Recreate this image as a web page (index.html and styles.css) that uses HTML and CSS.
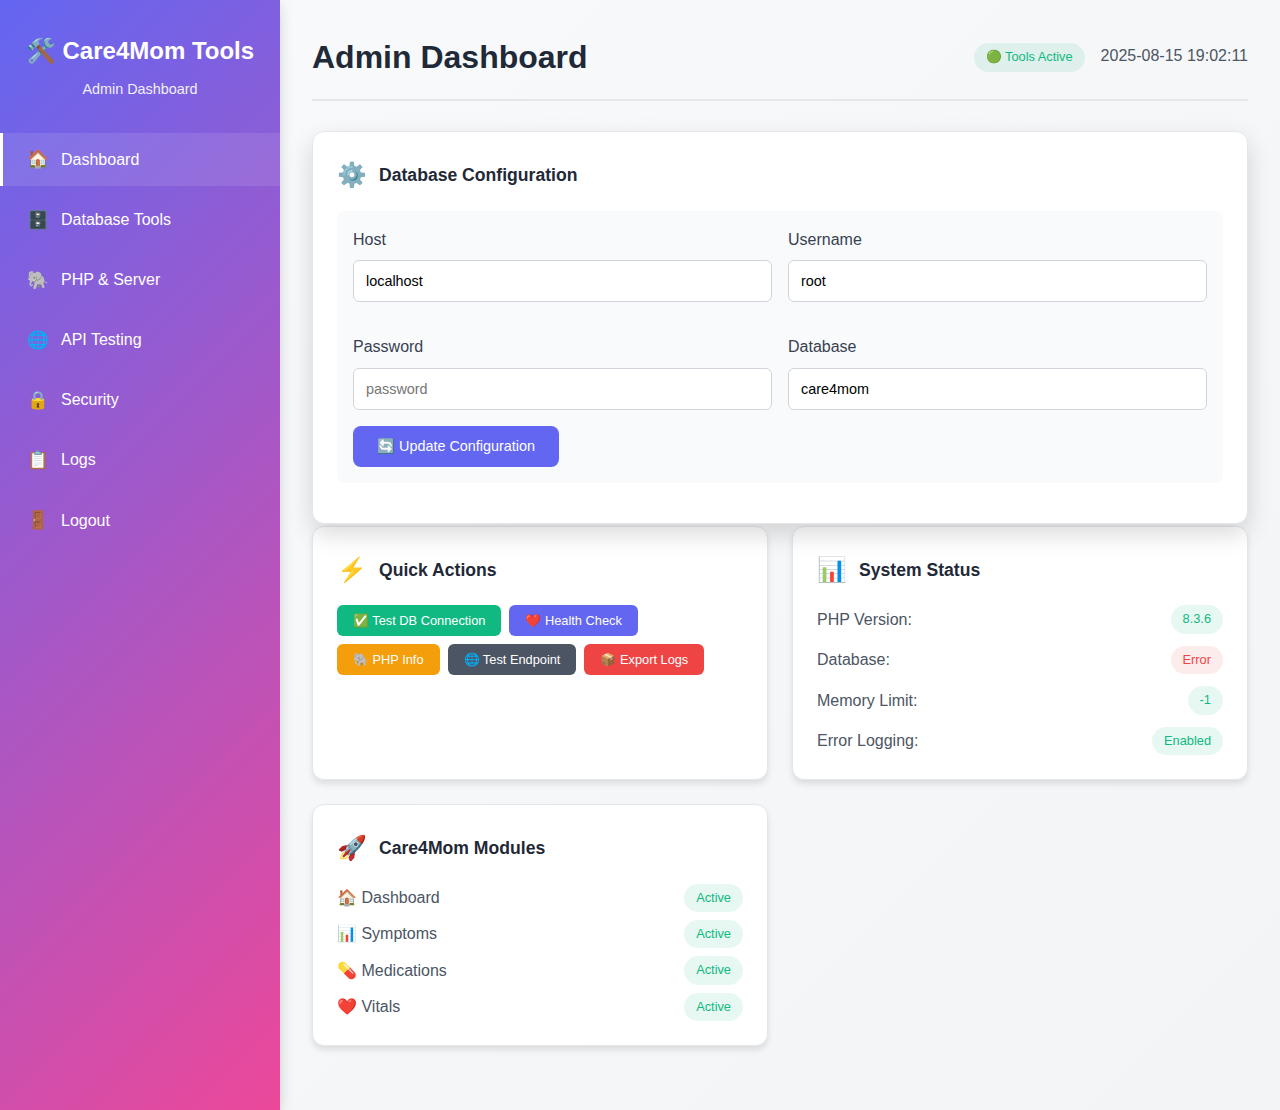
FILE: index.html
```html
<!DOCTYPE html>
<html lang="en">
<head>
<meta charset="UTF-8">
<title>Care4Mom Tools - Admin Dashboard</title>
<link rel="stylesheet" href="styles.css">
</head>
<body>
<div class="layout">
  <nav class="sidebar">
    <div class="sidebar-header">
      <h1>🛠️ Care4Mom Tools</h1>
      <p>Admin Dashboard</p>
    </div>
    <ul class="nav">
      <li><a class="active"><span class="nav-icon">🏠</span>Dashboard</a></li>
      <li><a><span class="nav-icon">🗄️</span>Database Tools</a></li>
      <li><a><span class="nav-icon">🐘</span>PHP &amp; Server</a></li>
      <li><a><span class="nav-icon">🌐</span>API Testing</a></li>
      <li><a><span class="nav-icon">🔒</span>Security</a></li>
      <li><a><span class="nav-icon">📋</span>Logs</a></li>
      <li><a><span class="nav-icon">🚪</span>Logout</a></li>
    </ul>
  </nav>
  <main class="main">
    <header class="header">
      <h2>Admin Dashboard</h2>
      <div class="header-info">
        <span class="badge ok">🟢 Tools Active</span>
        <span>2025-08-15 19:02:11</span>
      </div>
    </header>
    <section class="card config">
      <div class="card-header"><span class="card-icon">⚙️</span><h3>Database Configuration</h3></div>
      <form class="config-form">
        <div class="form-grid">
          <div class="field"><label for="host">Host</label><input id="host" type="text" value="localhost"></div>
          <div class="field"><label for="user">Username</label><input id="user" type="text" value="root"></div>
          <div class="field"><label for="pass">Password</label><input id="pass" type="password" placeholder="password"></div>
          <div class="field"><label for="db">Database</label><input id="db" type="text" value="care4mom"></div>
        </div>
        <button type="button" class="btn primary">🔄 Update Configuration</button>
      </form>
    </section>
    <div class="cards">
      <section class="card">
        <div class="card-header"><span class="card-icon">⚡</span><h3>Quick Actions</h3></div>
        <div class="actions">
          <button class="btn small green">✅ Test DB Connection</button>
          <button class="btn small primary">❤️ Health Check</button>
          <button class="btn small amber">🐘 PHP Info</button>
          <button class="btn small gray">🌐 Test Endpoint</button>
          <button class="btn small red">📦 Export Logs</button>
        </div>
      </section>
      <section class="card">
        <div class="card-header"><span class="card-icon">📊</span><h3>System Status</h3></div>
        <div class="rows status">
          <div class="row"><span>PHP Version:</span><span class="badge ok">8.3.6</span></div>
          <div class="row"><span>Database:</span><span class="badge error">Error</span></div>
          <div class="row"><span>Memory Limit:</span><span class="badge ok">-1</span></div>
          <div class="row"><span>Error Logging:</span><span class="badge ok">Enabled</span></div>
        </div>
      </section>
      <section class="card">
        <div class="card-header"><span class="card-icon">🚀</span><h3>Care4Mom Modules</h3></div>
        <div class="rows">
          <div class="row"><span>🏠 Dashboard</span><span class="badge ok">Active</span></div>
          <div class="row"><span>📊 Symptoms</span><span class="badge ok">Active</span></div>
          <div class="row"><span>💊 Medications</span><span class="badge ok">Active</span></div>
          <div class="row"><span>❤️ Vitals</span><span class="badge ok">Active</span></div>
        </div>
      </section>
    </div>
  </main>
</div>
</body>
</html>
```
FILE: styles.css
```css
* { margin: 0; padding: 0; box-sizing: border-box; }
body {
  font-family: "Liberation Sans", Arial, sans-serif;
  font-size: 16px;
  line-height: 1.6;
  color: #1f2937;
  background: linear-gradient(135deg, #f9fafb 0%, #f3f4f6 100%);
}
.layout { display: flex; min-height: 1110px; }
.sidebar {
  width: 280px;
  flex: none;
  color: #fff;
  background: linear-gradient(135deg, #6366f1 0%, #ec4899 100%);
  box-shadow: 0 10px 15px -3px rgba(0, 0, 0, .1), 0 0 15px rgba(0, 0, 0, .1);
}
.sidebar-header { padding: 32px 24px; text-align: center; }
.sidebar-header h1 { font-size: 24px; line-height: 38.4px; margin-bottom: 8px; white-space: nowrap; }
.sidebar-header p { font-size: 14.4px; line-height: 23.04px; opacity: .9; }
.nav { list-style: none; }
.nav li { margin-bottom: 8px; }
.nav a {
  display: flex;
  align-items: center;
  padding: 12px 24px;
  border-left: 3px solid transparent;
}
.nav .active { background: rgba(255, 255, 255, .1); border-left-color: #fff; }
.nav-icon { width: 22px; margin-right: 12px; font-size: 17.6px; text-align: center; }
.main { flex: 1; padding: 32px; }
.header {
  display: flex;
  justify-content: space-between;
  align-items: center;
  margin-bottom: 32px;
  padding-bottom: 16px;
  border-bottom: 2px solid #e5e7eb;
}
.header h2 { font-size: 32px; line-height: 51.2px; }
.header-info { display: flex; align-items: flex-start; gap: 16px; color: #4b5563; }
.badge {
  padding: 4px 12px;
  border-radius: 20px;
  font-size: 12.8px;
  line-height: 20.48px;
}
.ok { background: rgba(16, 185, 129, .1); color: #10b981; }
.error { background: rgba(239, 68, 68, .1); color: #ef4444; }
.card {
  padding: 24px;
  background: #fff;
  border: 1px solid #e5e7eb;
  border-radius: 12px;
  box-shadow: 0 4px 6px rgba(0, 0, 0, .1);
}
/* The active panel is lifted above the cards below it. */
.config {
  transform: translateY(-2px);
  box-shadow: 0 10px 25px rgba(0, 0, 0, .15);
}
.card-header { display: flex; align-items: center; height: 38.4px; margin-bottom: 16px; }
.card-icon { width: 30px; margin-right: 12px; font-size: 24px; line-height: 38.4px; }
.card-header h3 { font-size: 17.6px; }
.config-form { padding: 16px; margin-bottom: 16px; background: #f9fafb; border-radius: 8px; }
.form-grid { display: grid; grid-template-columns: 1fr 1fr; gap: 32px 16px; margin-bottom: 16px; }
.field label { display: block; margin-bottom: 8px; color: #374151; line-height: 25.6px; }
.field input {
  display: block;
  width: 100%;
  height: 42px;
  padding: 12px;
  border: 1px solid #d1d5db;
  border-radius: 6px;
  background: #fff;
  font: 14.4px "Liberation Sans", Arial, sans-serif;
}
.btn {
  display: block;
  padding: 12px 24px;
  border: 0;
  border-radius: 8px;
  color: #fff;
  font: 14.4px "Liberation Sans", Arial, sans-serif;
}
.small { height: 31px; padding: 8px 16px; border-radius: 6px; font-size: 12.8px; }
.primary { background: #6366f1; }
.green { background: #10b981; }
.amber { background: #f59e0b; }
.gray { background: #4b5563; }
.red { background: #ef4444; }
.cards { display: grid; grid-template-columns: 1fr 1fr; gap: 24px; }
.actions { display: flex; flex-wrap: wrap; gap: 8px; }
.rows { display: grid; gap: 8px; color: #4b5563; }
.status { gap: 12px; }
.row { display: flex; justify-content: space-between; align-items: center; }
```
